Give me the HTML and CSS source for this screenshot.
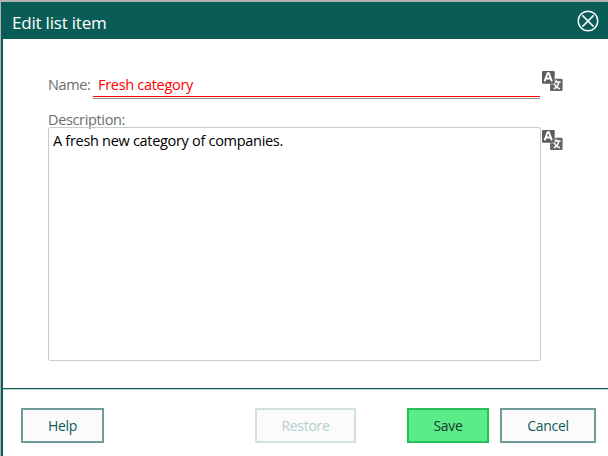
FILE: index.html
```html
<!DOCTYPE html>
<html lang="en">
<head>
<meta charset="utf-8">
<title>Edit list item</title>
<link rel="stylesheet" href="styles.css">
</head>
<body>
<svg width="0" height="0" class="defs">
  <symbol id="translate" viewBox="0 0 21 20">
    <rect x="8" y="7.8" width="12.6" height="12.2" rx="1.2" fill="#666"/>
    <path d="M10.2 11h8.4M14.3 9.3V11M11.8 17.7c2.6-.8 4.3-3 4.9-6.3M12.3 12.4c.8 2.6 2.8 4.5 5.7 5.3" fill="none" stroke="#fff" stroke-width="1.5"/>
    <rect x="-.6" y="-.6" width="13.8" height="13.9" rx="1.5" fill="#fff"/>
    <rect x="0" y="0" width="12.7" height="12.7" rx="1.2" fill="#5c5c5c"/>
    <path d="M2.6 10.3L5.6 2.2h1.3l3 8.1M3.8 7.5h5" fill="none" stroke="#fff" stroke-width="1.9"/>
  </symbol>
</svg>
<div class="dialog">
  <header class="header">
    <h1 class="title">Edit list item</h1>
    <svg class="close" viewBox="0 0 22 22"><circle cx="11" cy="11" r="9.8"/><path d="M5.4 5.4l11.2 11.2M16.6 5.4L5.4 16.6"/></svg>
  </header>
  <main class="content">
    <div class="row name-row">
      <span class="label name-label">Name:</span>
      <div class="name-field"><span class="name-value">Fresh category</span></div>
      <svg class="translate"><use href="#translate"/></svg>
    </div>
    <div class="label desc-label">Description:</div>
    <div class="row">
      <div class="textarea"><span class="desc-value">A fresh new category of companies.</span></div>
      <svg class="translate desc-icon"><use href="#translate"/></svg>
    </div>
  </main>
  <footer class="footer">
    <button class="btn help">Help</button>
    <button class="btn restore" disabled>Restore</button>
    <button class="btn save">Save</button>
    <button class="btn cancel">Cancel</button>
  </footer>
</div>
</body>
</html>
```
FILE: styles.css
```css
* { box-sizing: border-box; }
body {
  margin: 0;
  padding: 2px 0 0 1px;
  height: 456px;
  overflow: hidden;
  background: #b1b3b3;
  font-family: "Open Sans", "Noto Sans", sans-serif;
  font-size: 14px;
}
.defs { display: none; }
.dialog {
  height: 454px;
  display: flex;
  flex-direction: column;
  background: #fff;
  border-left: 2px solid #0a5d56;
}
.header {
  height: 37px;
  flex: none;
  display: flex;
  align-items: center;
  justify-content: space-between;
  padding: 0 9px;
  background: #0a5d56;
  color: #fff;
}
.title { margin: 4px 0 0; font-size: 17px; font-weight: 400; line-height: 24px; letter-spacing: -0.2px; }
.close { width: 22px; height: 22px; fill: none; stroke: #fff; stroke-width: 1.5; }
.content { height: 349px; flex: none; padding: 32px 0 0 45px; font-size: 14.5px; }
.row { display: flex; align-items: flex-start; }
.label { color: #6d6d6d; line-height: 20px; }
.name-label { width: 45px; padding-top: 4px; letter-spacing: -0.4px; }
.name-field {
  width: 447px;
  height: 26px;
  padding: 4px 0 0 5px;
  border-bottom: 1px solid #f00;
  box-shadow: 0 1px #fff, 0 2px #8c8c8c;
  color: #f00;
  line-height: 20px;
}
.name-value { letter-spacing: -0.3px; }
.translate { width: 21px; height: 20px; margin-left: 2px; }
.desc-label { height: 17px; margin-top: 13px; letter-spacing: -0.35px; }
.textarea {
  width: 493px;
  height: 234px;
  padding: 3px 4px;
  border: 1px solid #c6cfcd;
  border-left-color: #c8c8c8;
  border-radius: 3px;
  color: #000;
  line-height: 20px;
}
.desc-value { letter-spacing: -0.3px; }
.desc-icon { margin: 3px 0 0 1px; }
.footer {
  flex: 1;
  display: flex;
  align-items: flex-start;
  padding: 18px 12px 0 18px;
  border-top: 1px solid #0a5d56;
  box-shadow: inset 0 1px #c4d0ce;
}
.btn {
  height: 35px;
  margin: 1px 0 0;
  padding: 0;
  border: 2px solid #6f9c98;
  background: #fbfbfb;
  color: #0a5d56;
  font: inherit;
  letter-spacing: -0.3px;
}
.help { width: 83px; }
.restore { width: 101px; margin-left: 151px; border-color: #d2e1df; color: #b5cecc; }
.save { width: 82px; margin-left: 51px; border-color: #27bf58; background: #5beb88; color: #173a2a; }
.cancel { width: 96px; margin-left: 11px; }
```
